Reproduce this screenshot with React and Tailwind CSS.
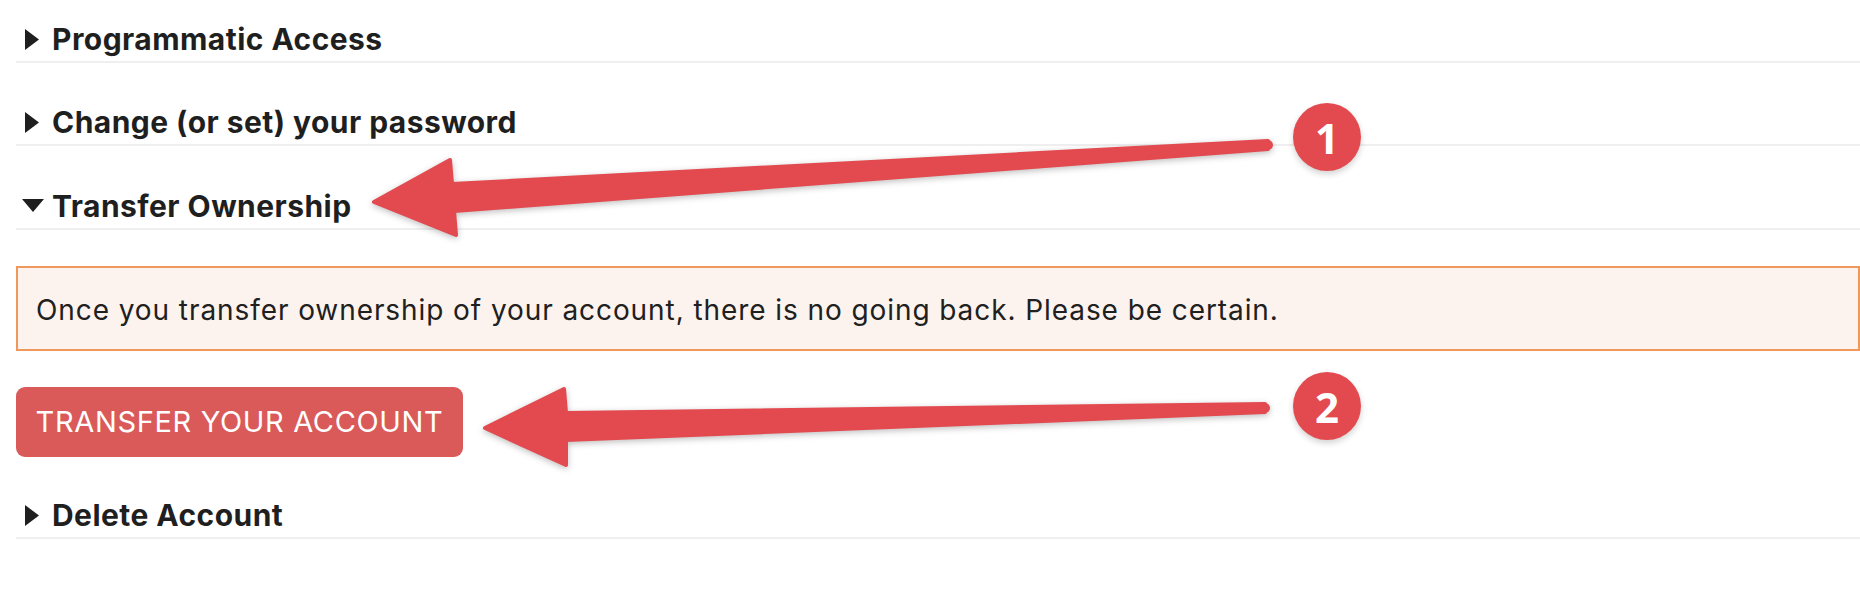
import React from 'react';

const FONT = { fontFamily: 'Inter, "Noto Sans", sans-serif' };

const Caret = ({ open }) =>
  open ? (
    <svg width="22" height="14" viewBox="0 0 22 14" className="shrink-0">
      <polygon points="0,0 22,0 11,13" fill="#1f1f1f" />
    </svg>
  ) : (
    <svg width="14" height="21" viewBox="0 0 14 21" className="shrink-0">
      <polygon points="0,0 14,10.5 0,21" fill="#1f1f1f" />
    </svg>
  );

// one <details>-style row with the bottom rule
const SectionHeader = ({ title, open, className = '' }) => (
  <div className={`border-b-2 border-[#efefef] pb-[4px] ${className}`}>
    <div className={`flex items-center h-[36px] ${open ? 'pl-[6px] gap-[8px]' : 'pl-[9px] gap-[13px]'}`}>
      <Caret open={open} />
      <span className="text-[30px] font-bold leading-[36px] text-[#1f1f1f] tracking-[0.45px]">{title}</span>
    </div>
  </div>
);

const Annotations = () => (
  <svg
    className="absolute left-0 top-0 pointer-events-none drop-shadow-[0_2px_3px_rgba(0,0,0,0.25)]"
    width="1860"
    height="606"
    viewBox="0 0 1860 606"
  >
    <g fill="#e34a4f" stroke="#e34a4f" strokeWidth="4" strokeLinejoin="round">
      <polygon points="1268,141 452,184 450,160 374,202 456,235 454,211 1268,149" />
      <polygon points="1265,404 566,413 564,389 485,428 566,465 566,440 1265,412" />
    </g>
    <circle cx="1268" cy="145" r="5" fill="#e34a4f" />
    <circle cx="1265" cy="408" r="5" fill="#e34a4f" />
  </svg>
);

const Badge = ({ n, className }) => (
  <div
    className={`absolute w-[68px] h-[68px] rounded-full bg-[#e34a4f] flex items-center justify-center text-white text-[42px] font-bold shadow-[0_3px_6px_rgba(0,0,0,0.18)] ${className}`}
    style={{ fontFamily: '"Open Sans", sans-serif' }}
  >
    {n}
  </div>
);

export default function App() {
  return (
    <div className="relative w-full h-[606px] bg-white overflow-hidden" style={FONT}>
      <div className="pl-4 pt-[21px]">
        <SectionHeader title="Programmatic Access" />
        <SectionHeader title="Change (or set) your password" className="mt-[41px]" />
        <SectionHeader title="Transfer Ownership" open className="mt-[42px]" />

        <div className="mt-[36px] border-2 border-[#f0975b] bg-[#fcf3ee] h-[85px] flex items-center pl-[18px]">
          <p className="text-[28px] text-[#202020] leading-none pt-[2px] tracking-[0.92px] whitespace-nowrap">
            Once you transfer ownership of your account, there is no going back. Please be certain.
          </p>
        </div>

        <button className="mt-[36px] h-[70px] w-[447px] rounded-[9px] bg-[#da5a5a] text-white text-[29px] tracking-[0.65px] flex items-center justify-center">
          TRANSFER YOUR ACCOUNT
        </button>

        <SectionHeader title="Delete Account" className="mt-[40px]" />
      </div>

      <Annotations />
      <Badge n="1" className="left-[1293px] top-[103px]" />
      <Badge n="2" className="left-[1293px] top-[372px]" />
    </div>
  );
}
